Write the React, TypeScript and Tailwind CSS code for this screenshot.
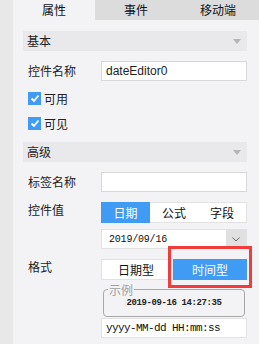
import React from "react";

const cjk = { fontFamily: '"Microsoft YaHei","Noto Sans CJK SC",sans-serif' };
const mono = { fontFamily: '"Liberation Mono","DejaVu Sans Mono",monospace' };

function Tri() {
  return (
    <svg width="8" height="5" viewBox="0 0 8 5" className="mr-[6px]">
      <path d="M0 0 H8 L4 5 Z" fill="#b4b4b8" />
    </svg>
  );
}

function Header({ text }: { text: string }) {
  return (
    <div className="h-[20px] bg-[#e9e9ec] flex items-center justify-between pl-[4px] text-[12px] text-[#222]">
      <span>{text}</span>
      <Tri />
    </div>
  );
}

function Check({ label }: { label: string }) {
  return (
    <div className="flex items-center h-[13px] pl-[5px] text-[12px] text-[#222]">
      <div className="w-[13px] h-[13px] bg-[#3f9bf3] flex items-center justify-center">
        <svg width="10" height="9" viewBox="0 0 10 9">
          <path d="M1.5 4.5 L4 7 L8.5 1.5" stroke="#fff" strokeWidth="1.8" fill="none" />
        </svg>
      </div>
      <span className="ml-[3px]">{label}</span>
    </div>
  );
}

export default function App() {
  return (
    <div className="w-[259px] h-[344px] flex bg-[#f3f3f5] overflow-hidden relative" style={cjk}>
      <div className="w-[13px] bg-[#e8e8e8]" />
      <div className="flex-1 flex flex-col">
        <div className="h-[20px] grid grid-cols-3 text-[12px] text-[#111] bg-[#dcdcdc]">
          <div className="bg-[#f3f3f5] flex items-center justify-center">属性</div>
          <div className="flex items-center justify-center">事件</div>
          <div className="flex items-center justify-center">移动端</div>
        </div>
        <div className="pl-[10px] pr-[12px] pt-[11px] flex flex-col">
          <Header text="基本" />
          <div className="mt-[10px] flex items-center h-[20px]">
            <div className="w-[78px] pl-[5px] text-[12px] text-[#222]">控件名称</div>
            <div className="flex-1 h-[20px] bg-white border border-[#d8d8d8] flex items-center pl-[4px] text-[12px] text-[#222]" style={{ fontFamily: '"Liberation Sans",Arial,sans-serif' }}>
              dateEditor0
            </div>
          </div>
          <div className="mt-[11px]"><Check label="可用" /></div>
          <div className="mt-[12px]"><Check label="可见" /></div>
          <div className="mt-[12px]"><Header text="高级" /></div>
          <div className="mt-[10px] flex items-center h-[20px]">
            <div className="w-[78px] pl-[5px] text-[12px] text-[#222]">标签名称</div>
            <div className="flex-1 h-[20px] bg-white border border-[#d8d8d8]" />
          </div>
          <div className="mt-[10px] flex items-start">
            <div className="w-[78px] pl-[5px] text-[12px] text-[#222] leading-[16px]">控件值</div>
            <div className="flex-1 flex flex-col">
              <div className="h-[21px] grid grid-cols-3 border border-[#e2e2e2] bg-white text-[12px]">
                <div className="bg-[#3f9bf3] text-white flex items-center justify-center -m-[1px] mr-0">日期</div>
                <div className="flex items-center justify-center text-[#111]">公式</div>
                <div className="flex items-center justify-center text-[#111]">字段</div>
              </div>
              <div className="mt-[6px] h-[20px] flex bg-white border border-[#e2e2e2]">
                <div className="flex-1 flex items-center pl-[7px] text-[10px] tracking-[-0.2px] text-[#111]" style={mono}>2019/09/16</div>
                <div className="w-[20px] bg-[#e0e0e0] flex items-center justify-center">
                  <svg width="8" height="5" viewBox="0 0 8 5">
                    <path d="M0.5 0.5 L4 4 L7.5 0.5" stroke="#666" strokeWidth="1" fill="none" />
                  </svg>
                </div>
              </div>
            </div>
          </div>
          <div className="mt-[10px] flex items-start">
            <div className="w-[78px] pl-[5px] text-[12px] text-[#222] leading-[16px]">格式</div>
            <div className="flex-1 flex flex-col">
              <div className="h-[21px] flex gap-[2px] text-[12px]">
                <div className="w-[70px] bg-white border border-[#e2e2e2] flex items-center justify-center text-[#111]">日期型</div>
                <div className="flex-1 bg-[#3f9bf3] text-white flex items-center justify-center">时间型</div>
              </div>
              <fieldset className="mx-[2px] mt-[3px] border border-[#a8a8a8] rounded-[4px] px-[4px] pb-[5px] h-[34px]">
                <legend className="px-[1px] text-[12px] leading-[13px] text-[#a0a0a0]">示例</legend>
                <div className="text-center text-[9px] tracking-[-0.4px] font-bold text-[#222] leading-[12px] mt-[1px]" style={mono}>
                  2019-09-16 14:27:35
                </div>
              </fieldset>
              <div className="mt-[1px] h-[20px] bg-white border border-[#e2e2e2] flex items-center pl-[4px] text-[11px] tracking-[-0.6px] text-[#111]" style={mono}>
                yyyy-MM-dd HH:mm:ss
              </div>
            </div>
          </div>
        </div>
      </div>
      <div className="absolute left-[168px] top-[246px] w-[84px] h-[42px] border-[3px] border-[#f23b3b]" />
    </div>
  );
}
